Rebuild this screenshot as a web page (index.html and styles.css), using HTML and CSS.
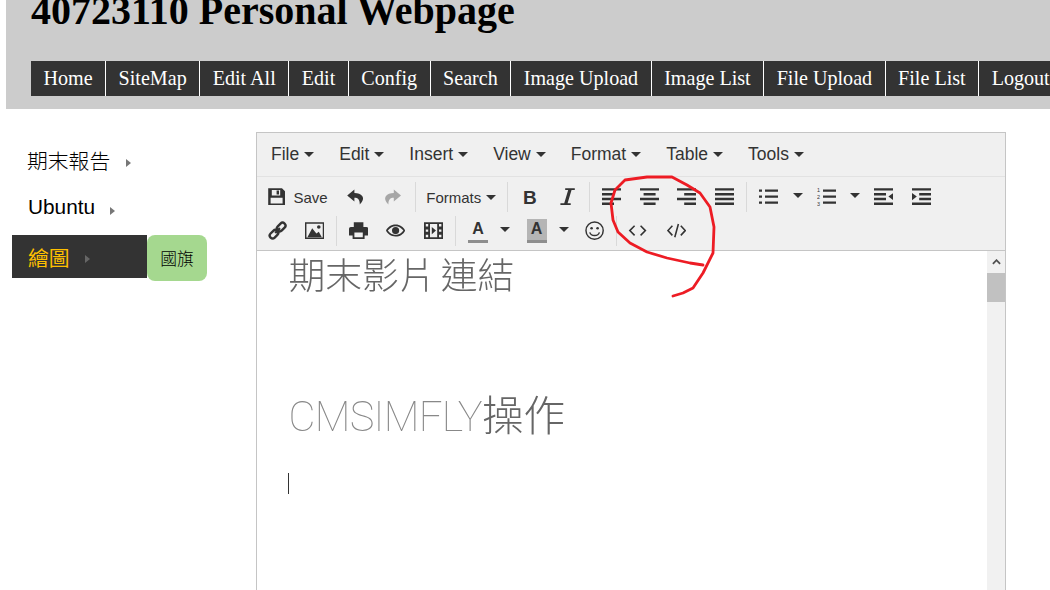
FILE: index.html
```html
<!DOCTYPE html>
<html lang="zh-Hant">
<head>
<meta charset="utf-8">
<title>40723110 Personal Webpage</title>
<link rel="stylesheet" href="styles.css">
</head>
<body>
<header class="site-header">
  <h1 class="site-title">40723110 Personal Webpage</h1>
  <nav class="site-nav">
    <a class="nav-item">Home</a><a class="nav-item">SiteMap</a><a class="nav-item">Edit All</a><a class="nav-item">Edit</a><a class="nav-item">Config</a><a class="nav-item">Search</a><a class="nav-item">Image Upload</a><a class="nav-item">Image List</a><a class="nav-item">File Upload</a><a class="nav-item">File List</a><a class="nav-item">Logout</a>
  </nav>
</header>
<main class="page-body">
  <aside class="sidebar">
    <div class="side-row side-first"><span class="side-link cjk">期末報告</span><i class="side-arrow"></i></div>
    <div class="side-row side-second"><span class="side-link">Ubuntu</span><i class="side-arrow"></i></div>
    <div class="side-active-wrap">
      <div class="side-active"><span class="side-link cjk side-link-on">繪圖</span><i class="side-arrow"></i></div>
      <div class="side-sub cjk">國旗</div>
    </div>
  </aside>
  <section class="editor">
    <div class="menubar">
      <span class="menu-item">File<i class="caret"></i></span>
      <span class="menu-item">Edit<i class="caret"></i></span>
      <span class="menu-item">Insert<i class="caret"></i></span>
      <span class="menu-item">View<i class="caret"></i></span>
      <span class="menu-item">Format<i class="caret"></i></span>
      <span class="menu-item">Table<i class="caret"></i></span>
      <span class="menu-item">Tools<i class="caret"></i></span>
    </div>
    <div class="toolbar">
      <div class="tool-row">
        <span class="btn btn-save"><svg class="ico" viewBox="0 0 16 16"><path fill-rule="evenodd" d="M1 1h11.5L15 3.500V15H1zM4 2.500V7h7V2.500zM8 3h2v3.300H8zM3 9v4.700h10V9z"/></svg><span class="btn-label">Save</span></span>
        <span class="btn"><svg class="ico" viewBox="0 0 16 16"><path d="M7 2 1 7l6 5V9c3 0 4.500 1.500 4.500 5.500C14 12 15 9.500 13.500 7.500 12.300 5.800 10 5 7 5z"/></svg></span>
        <span class="btn btn-off"><svg class="ico" viewBox="0 0 16 16"><path d="M9 2l6 5-6 5V9c-3 0-4.500 1.500-4.500 5.500C2 12 1 9.500 2.500 7.500 3.700 5.800 6 5 9 5z"/></svg></span>
        <i class="sep"></i>
        <span class="btn btn-formats">Formats<i class="caret"></i></span>
        <i class="sep"></i>
        <span class="btn"><b class="glyph-b">B</b></span>
        <span class="btn"><svg class="ico" viewBox="0 0 16 16"><path d="M6 1h8v1.500h-2.700L8 13.500h2.600V15H2v-1.500h3.200L8.500 2.500H6z"/></svg></span>
        <i class="sep"></i>
        <span class="btn"><svg class="ico" viewBox="0 0 16 16"><path d="M0 1h16v2H0zM0 5h10v2H0zM0 9h16v2H0zM0 13h10v2H0z"/></svg></span>
        <span class="btn"><svg class="ico" viewBox="0 0 16 16"><path d="M0 1h16v2H0zM3 5h10v2H3zM0 9h16v2H0zM3 13h10v2H3z"/></svg></span>
        <span class="btn"><svg class="ico" viewBox="0 0 16 16"><path d="M0 1h16v2H0zM6 5h10v2H6zM0 9h16v2H0zM6 13h10v2H6z"/></svg></span>
        <span class="btn"><svg class="ico" viewBox="0 0 16 16"><path d="M0 1h16v2H0zM0 5h16v2H0zM0 9h16v2H0zM0 13h16v2H0z"/></svg></span>
        <i class="sep"></i>
        <span class="btn"><svg class="ico" viewBox="0 0 16 16"><path d="M0 2h2.500v2H0zM0 7h2.500v2H0zM0 12h2.500v2H0zM5 2h11v2H5zM5 7h11v2H5zM5 12h11v2H5z"/></svg></span>
        <span class="btn-arrow"><i class="caret"></i></span>
        <span class="btn"><svg class="ico" viewBox="0 0 16 16"><text class="num-mark" x="0" y="4.500">1</text><text class="num-mark" x="0" y="10">2</text><text class="num-mark" x="0" y="15.500">3</text><path d="M5 2h11v2H5zM5 7h11v2H5zM5 12h11v2H5z"/></svg></span>
        <span class="btn-arrow"><i class="caret"></i></span>
        <span class="btn"><svg class="ico" viewBox="0 0 16 16"><path d="M0 1h16v2H0zM0 5h10v2H0zM0 9h10v2H0zM0 13h16v2H0zM16 5v6l-4-3z"/></svg></span>
        <span class="btn"><svg class="ico" viewBox="0 0 16 16"><path d="M0 1h16v2H0zM6 5h10v2H6zM6 9h10v2H6zM0 13h16v2H0zM0 5v6l4-3z"/></svg></span>
      </div>
      <div class="tool-row">
        <span class="btn"><svg class="ico" viewBox="0 0 16 16"><g fill="none" stroke="#333" stroke-width="2"><rect x="7" y="2.600" width="8" height="4.800" rx="2.400" transform="rotate(-45 11 5)"/><rect x="1" y="8.600" width="8" height="4.800" rx="2.400" transform="rotate(-45 5 11)"/><path d="M6 10l4-4"/></g></svg></span>
        <span class="btn"><svg class="ico" viewBox="0 0 16 16"><path fill-rule="evenodd" d="M0 1h16v14H0zM1.200 2.200v11.600h13.600V2.200z"/><circle cx="11.500" cy="5" r="1.500"/><path d="M2 13.500l4-7.500 3.500 4.500 2-1.500 2.500 4.500z"/></svg></span>
        <i class="sep sep-tight"></i>
        <span class="btn"><svg class="ico" viewBox="0 0 16 16"><path fill-rule="evenodd" d="M4 1h8v4H4zM1.500 5h13A1.500 1.500 0 0 1 16 6.500V12h-3v3H3v-3H0V6.500A1.500 1.500 0 0 1 1.500 5zM4.500 9.500V13.500h7V9.500z"/></svg></span>
        <span class="btn"><svg class="ico" viewBox="0 0 16 16"><path fill-rule="evenodd" d="M8 3c3.800 0 6.800 2.300 8 5-1.200 2.700-4.200 5-8 5s-6.800-2.300-8-5c1.200-2.700 4.200-5 8-5zM8 4.300C5.300 4.300 3 5.900 1.500 8 3 10.100 5.300 11.700 8 11.700s5-1.600 6.500-3.700C13 5.900 10.700 4.300 8 4.300zM8 5a3 3 0 1 1 0 6 3 3 0 0 1 0-6z"/></svg></span>
        <span class="btn"><svg class="ico" viewBox="0 0 16 16"><path fill-rule="evenodd" d="M0 1h16v14H0zM1.500 2.500v2h2v-2zM1.500 7v2h2V7zM1.500 11.500v2h2v-2zM12.500 2.500v2h2v-2zM12.500 7v2h2V7zM12.500 11.500v2h2v-2zM5 2.500v11h6v-11zM6.500 5l3.500 3-3.500 3z"/></svg></span>
        <i class="sep"></i>
        <span class="btn btn-color btn-color-fg"><b class="glyph-a">A</b><i class="color-line"></i></span>
        <span class="btn-arrow"><i class="caret"></i></span>
        <span class="btn btn-color btn-color-bg"><b class="glyph-a">A</b><i class="color-line"></i></span>
        <span class="btn-arrow"><i class="caret"></i></span>
        <span class="btn btn-emoji"><svg class="ico" viewBox="0 0 16 16"><g fill="none" stroke="#333" stroke-width="1.200"><circle cx="8" cy="8" r="7.200"/><path d="M4 9.500c1 3.500 7 3.500 8 0"/></g><circle cx="5.500" cy="6" r="1.100"/><circle cx="10.500" cy="6" r="1.100"/></svg></span>
        <i class="sep sep-tight"></i>
        <span class="btn"><svg class="ico" viewBox="0 0 16 16"><path class="code-line" d="M5.500 4 1.500 8l4 4M10.500 4l4 4-4 4"/></svg></span>
        <span class="btn btn-html"><svg class="ico" viewBox="0 0 16 16"><path class="code-line" d="M4.500 4 .8 8l3.700 4M11.500 4l3.700 4-3.700 4M9.500 2.500l-3 11"/></svg></span>
      </div>
    </div>
    <div class="edit-area">
      <div class="edit-content">
        <h2 class="doc-h1 cjk-light">期末影片 連結</h2>
        <h2 class="doc-h2"><span class="thin">CMSIMFLY</span><span class="cjk-light">操作</span></h2>
        <p class="doc-caret"><i class="caret-line"></i></p>
      </div>
      <div class="scrollbar">
        <div class="scroll-up"><svg class="scroll-ico" viewBox="0 0 10 6"><path d="M1 5l4-4 4 4"/></svg></div>
        <div class="scroll-thumb"></div>
      </div>
    </div>
  </section>
</main>
<svg class="annotation" viewBox="0 0 1050 590"><path d="M703 265 690 263 667 258 647 252 630 243 618 232 613 220 611 203 615 190 625 180 647 177 672 177 687 185 700 193 710 207 714 227 713 253 703 273 693 288 683 293 673 296"/></svg>
</body>
</html>
```
FILE: styles.css
```css
html, body {
  margin: 0;
  height: 590px;
  overflow: hidden;
  background: #fff;
}
body {
  font-family: "Liberation Sans", Arial, sans-serif;
  color: #000;
}
.site-header {
  margin-left: 6px;
  height: 109px;
  background: #ccc;
  overflow: hidden;
}
.site-title {
  margin: -11.500px 0 0 25px;
  font: bold 40px/44px "Liberation Serif", serif;
  white-space: nowrap;
}
.site-nav {
  display: flex;
  margin: 28.500px 0 0 25px;
  height: 35px;
  white-space: nowrap;
}
.nav-item {
  flex: none;
  padding: 0 12.500px;
  background: #333;
  border-right: 1px solid #fff;
  color: #fff;
  font: 20.100px/35px "Liberation Serif", serif;
}
.nav-item:last-child {
  border-right: 0;
}
.page-body {
  display: flex;
  align-items: flex-start;
  padding-top: 23px;
}
.sidebar {
  flex: none;
  width: 244px;
  margin-left: 12px;
  font-size: 20.800px;
}
.cjk {
  font-family: "Liberation Sans", "Noto Sans CJK TC", sans-serif;
  font-weight: 300;
}
.side-link-on {
  font-weight: 400;
}
.side-row {
  display: flex;
  align-items: center;
  height: 24px;
}
.side-first {
  margin: 16px 0 0 15px;
}
.side-second {
  margin: 23px 0 0 16px;
}
.side-arrow {
  width: 0;
  height: 0;
  margin: 5px 0 0 16px;
  border-left: 5px solid #777;
  border-top: 4.500px solid transparent;
  border-bottom: 4.500px solid transparent;
}
.side-second .side-arrow {
  margin: 7px 0 0 15px;
}
.side-active-wrap {
  display: flex;
  align-items: flex-start;
  margin-top: 16px;
}
.side-active {
  display: flex;
  align-items: center;
  width: 135px;
  height: 43px;
  padding-left: 16px;
  box-sizing: border-box;
  background: #333;
  color: #ffc000;
}
.side-active .side-arrow {
  margin-left: 15px;
  border-left-color: #666;
}
.side-sub {
  display: flex;
  align-items: center;
  justify-content: center;
  width: 60px;
  height: 46px;
  border-radius: 8px;
  background: #a5d88f;
  font-size: 16.800px;
  color: #000;
}
.editor {
  flex: none;
  width: 748px;
  height: 457px;
  border: 1px solid #c5c5c5;
  border-bottom: 0;
  color: #333;
  overflow: hidden;
}
.menubar {
  display: flex;
  gap: 25px;
  align-items: center;
  height: 43px;
  padding-left: 14px;
  background: #f0f0f0;
  border-bottom: 1px solid #e2e2e2;
  font-size: 17.500px;
}
.menu-item {
  display: flex;
  align-items: center;
}
.caret {
  display: inline-block;
  width: 0;
  height: 0;
  margin-left: 5px;
  border-left: 5px solid transparent;
  border-right: 5px solid transparent;
  border-top: 5px solid #333;
}
.toolbar {
  height: 73px;
  padding-left: 1.500px;
  background: #f0f0f0;
  border-bottom: 1px solid #c5c5c5;
}
.tool-row {
  display: flex;
  align-items: center;
  height: 34px;
}
.tool-row:first-child {
  padding-top: 3px;
}
.btn {
  display: flex;
  flex: none;
  align-items: center;
  justify-content: center;
  width: 37.500px;
  height: 30px;
}
.ico {
  width: 19.200px;
  height: 19.200px;
  fill: #333;
}
.btn-save {
  width: 78px;
  gap: 7px;
}
.btn-label {
  font-size: 15px;
}
.btn-off .ico {
  fill: #a6a6a6;
}
.btn-formats {
  width: 85.500px;
  font-size: 15px;
}
.sep {
  flex: none;
  width: 1px;
  height: 30px;
  margin: 0 3px;
  background: #d9d9d9;
}
.sep-tight {
  margin: 0 2.500px;
}
.glyph-b {
  font-size: 19px;
  line-height: 1;
}
.num-mark {
  font: 4.500px "Liberation Sans", sans-serif;
}
.code-line {
  fill: none;
  stroke: #333;
  stroke-width: 1.300;
}
.btn-color {
  flex-direction: column;
  justify-content: flex-start;
  width: 20px;
  height: 24px;
}
.btn-color-fg {
  margin: 0 6.500px 0 9px;
}
.btn-color-bg {
  margin: 0 7px 0 12px;
  background: #b5b5b5;
}
.btn-emoji {
  margin-left: 2px;
}
.btn-html {
  margin-left: 1px;
}
.glyph-a {
  font-size: 16px;
  line-height: 20px;
}
.color-line {
  width: 20px;
  height: 3px;
  margin-top: 1px;
  background: #8e8e8e;
}
.btn-arrow {
  display: flex;
  flex: none;
  justify-content: center;
  width: 20px;
  margin-top: -4px;
}
.btn-arrow .caret {
  margin-left: 0;
}
.edit-area {
  display: flex;
  height: 339px;
  background: #fff;
}
.edit-content {
  flex: 1;
  padding-left: 31.500px;
  color: #666;
  will-change: transform;
}
.doc-h1 {
  margin: -2px 0 0;
  font-size: 36.800px;
  line-height: 48px;
  word-spacing: -3px;
}
.doc-h2 {
  margin: 92px 0 0;
  font-size: 41.600px;
  line-height: 48px;
  font-weight: 300;
  white-space: nowrap;
}
.cjk-light {
  font-family: "Noto Sans CJK TC", sans-serif;
  font-weight: 300;
}
.thin {
  font-family: Roboto, sans-serif;
  font-weight: 100;
  letter-spacing: -0.700px;
  color: #888;
}
.doc-caret {
  margin: 32px 0 0;
  height: 21px;
}
.caret-line {
  display: block;
  width: 1px;
  height: 21px;
  margin-left: -1px;
  background: #333;
}
.scrollbar {
  flex: none;
  width: 18px;
  background: #f1f1f1;
}
.scroll-up {
  display: flex;
  align-items: center;
  justify-content: center;
  height: 22px;
}
.scroll-ico {
  width: 9px;
  height: 6px;
  fill: none;
  stroke: #505050;
  stroke-width: 2;
}
.scroll-thumb {
  height: 29px;
  background: #c1c1c1;
}
.annotation {
  position: absolute;
  left: 0;
  top: 0;
  width: 1050px;
  height: 590px;
  fill: none;
  stroke: #ed1c24;
  stroke-width: 2.800;
  stroke-linejoin: round;
  stroke-linecap: round;
  pointer-events: none;
}
```
